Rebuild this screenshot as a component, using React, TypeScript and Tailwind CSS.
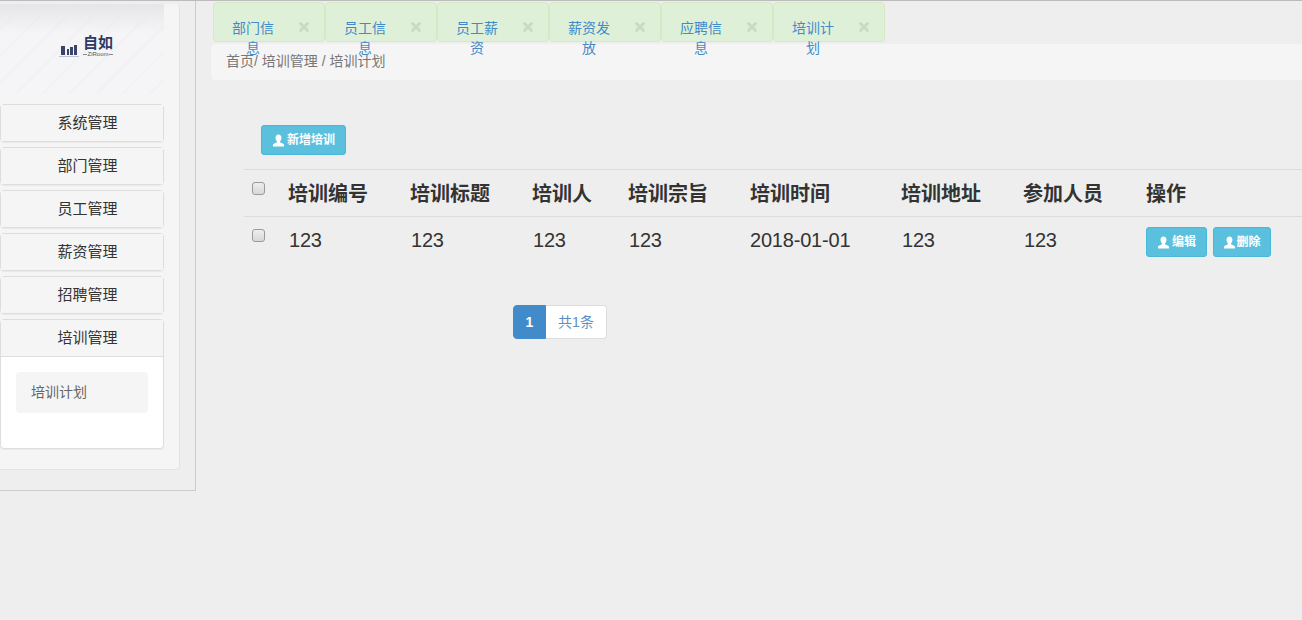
import { X } from 'lucide-react'

const tabs = ['部门信息', '员工信息', '员工薪资', '薪资发放', '应聘信息', '培训计划']
const menus = ['系统管理', '部门管理', '员工管理', '薪资管理', '招聘管理']
const font = "font-['Liberation_Sans','Noto_Sans_CJK_SC',sans-serif]"

function UserIcon({ className }: { className?: string }) {
  return (
    <svg viewBox="0 0 14 14" className={className} fill="currentColor">
      <path d="M7 0.5C9 0.5 10.2 2 10.2 4C10.2 5.6 9.5 7 8.7 7.8C8.5 8.6 8.8 9 9.6 9.4C11.4 10.1 13 10.6 13 12V13.5H1V12C1 10.6 2.6 10.1 4.4 9.4C5.2 9 5.5 8.6 5.3 7.8C4.5 7 3.8 5.6 3.8 4C3.8 2 5 0.5 7 0.5Z" />
    </svg>
  )
}

function Logo() {
  return (
    <div className="relative flex h-[90px] w-[164px] items-start overflow-hidden bg-[repeating-linear-gradient(135deg,#f5f5f7_0px,#f5f5f7_16px,#f2f2f5_17px,#f2f2f5_19px)] pl-[59px] pt-[31px]">
      <div className="absolute top-0 right-0 left-0 h-[30px] bg-gradient-to-b from-[#e6e6e9] to-transparent" />
      <svg viewBox="0 0 20 13" className="relative mt-[9px] mr-[4px] h-[13px] w-[20px]" fill="#3a4468">
        <path d="M2 2h4v9H2zM8 5h2v6H8zM11 3h3v8h-3zM15 1h3v10h-3z" />
        <path d="M0 12h20v0.6H0z" fill="#9aa0b8" />
      </svg>
      <div className="relative flex w-[30px] flex-col items-center">
        <span className="text-[15px] leading-[15px] font-bold whitespace-nowrap text-[#2e3a66]">自如</span>
        <div className="mt-[1px] flex w-full items-center justify-between">
          <span className="h-px w-[6px] bg-[#888]" />
          <span className="text-[6px] leading-[7px] text-[#555]">ZiRoom</span>
          <span className="h-px w-[6px] bg-[#888]" />
        </div>
      </div>
    </div>
  )
}

function MenuHead({ label, open }: { label: string; open?: boolean }) {
  return (
    <div
      className={`flex items-center justify-center bg-[#f5f5f5] pl-[11px] text-[15px] text-[#333] ${
        open ? 'h-[37px] border-b border-[#ddd]' : 'h-[36px] pt-[1px]'
      }`}
    >
      {label}
    </div>
  )
}

function Sidebar() {
  return (
    <aside className="h-[490px] w-[196px] shrink-0 border-r border-b border-[#ccc] pt-[3px]">
      <div className="h-[466px] w-[180px] rounded-r-[4px] border-r border-b border-[#e3e3e3] bg-[#f5f5f5]">
        <Logo />
        <div className="mt-[10px] flex w-[164px] flex-col gap-[5px]">
          {menus.map((m) => (
            <div key={m} className="rounded-[4px] border border-[#ddd] shadow-[0_1px_1px_rgba(0,0,0,0.05)]">
              <MenuHead label={m} />
            </div>
          ))}
          <div className="rounded-[4px] border border-[#ddd] bg-white shadow-[0_1px_1px_rgba(0,0,0,0.05)]">
            <MenuHead label="培训管理" open />
            <div className="h-[91px] px-[15px] pt-[15px]">
              <div className="flex h-[41px] items-center rounded-[4px] bg-[#f5f5f5] pl-[15px] text-[14px] text-[#666]">
                培训计划
              </div>
            </div>
          </div>
        </div>
      </div>
    </aside>
  )
}

function Tab({ label }: { label: string }) {
  return (
    <div className="relative h-[40px] w-[112px] shrink-0 rounded-[4px] border border-[#d6e9c6] bg-[#dff0d8]">
      <p className="ml-[12px] w-[54px] pt-[15px] text-center text-[14px] leading-[20px] text-[#428bca]">
        {label}
      </p>
      <X size={14} strokeWidth={5} className="absolute top-[17px] right-[13px] text-[#c8dcc2]" />
    </div>
  )
}

function CheckBox() {
  return (
    <span className="block h-[13px] w-[13px] rounded-[3px] border border-[#9a9a9a] bg-gradient-to-b from-[#eeeeee] to-[#d8d8d8]" />
  )
}

function InfoBtn({ label, className }: { label: string; className: string }) {
  return (
    <span
      className={`flex h-[30px] items-center justify-center rounded-[3px] border border-[#46b8da] bg-[#5bc0de] text-[12px] font-bold text-white ${className}`}
    >
      <UserIcon className="h-[13px] w-[13px]" />
      {label}
    </span>
  )
}

const headWidths = ['w-[122px]', 'w-[122px]', 'w-[96px]', 'w-[122px]', 'w-[151px]', 'w-[122px]', 'w-[123px]']
const rowWidths = ['w-[122px]', 'w-[122px]', 'w-[96px]', 'w-[121px]', 'w-[152px]', 'w-[122px]', 'w-[122px]']
const heads = ['培训编号', '培训标题', '培训人', '培训宗旨', '培训时间', '培训地址', '参加人员']
const row = ['123', '123', '123', '123', '2018-01-01', '123', '123']

export default function App() {
  return (
    <div className={`flex h-[620px] w-[1302px] overflow-hidden border-t border-[#bbb] bg-[#eeeeee] ${font}`}>
      <Sidebar />
      <main className="min-w-0 flex-1 pl-[15px]">
        <div className="relative z-10 ml-[2px] flex h-[41px] pt-[1px]">
          {tabs.map((t) => (
            <Tab key={t} label={t} />
          ))}
        </div>
        <div className="mt-[2px] flex h-[36px] items-center rounded-l-[4px] bg-[#f5f5f5] pb-[1px] pl-[15px] text-[14px] text-[#777]">
          首页/ 培训管理 / 培训计划
        </div>
        <div className="pl-[33px]">
          <div className="pl-[17px] pt-[45px]">
            <InfoBtn label="新增培训" className="w-[85px] gap-[2px]" />
          </div>
          <div className="mt-[14px] flex h-[48px] items-center border-y border-[#ddd] pt-[1px] text-[20px] font-bold text-[#333]">
            <div className="w-[44px] self-start pl-[8px] pt-[11px]">
              <CheckBox />
            </div>
            {heads.map((h, i) => (
              <div key={h} className={headWidths[i]}>
                {h}
              </div>
            ))}
            <div>操作</div>
          </div>
          <div className="flex h-[47px] items-center pb-[2px] text-[20px] tracking-[-0.2px] text-[#333]">
            <div className="w-[45px] self-start pl-[8px] pt-[12px]">
              <CheckBox />
            </div>
            {row.map((c, i) => (
              <div key={i} className={rowWidths[i]}>
                {c}
              </div>
            ))}
            <div className="flex gap-[6px] pt-[5px] tracking-normal">
              <InfoBtn label="编辑" className="w-[61px] gap-[2px]" />
              <InfoBtn label="删除" className="w-[58px]" />
            </div>
          </div>
          <div className="ml-[269px] mt-[41px] flex h-[34px] w-[94px] text-[14px]">
            <span className="flex w-[33px] items-center justify-center rounded-l-[4px] border border-[#428bca] bg-[#428bca] font-bold text-white">
              1
            </span>
            <span className="flex flex-1 items-center justify-center rounded-r-[4px] border border-l-0 border-[#ddd] bg-white text-[#5b8fc0]">
              共1条
            </span>
          </div>
        </div>
      </main>
    </div>
  )
}
